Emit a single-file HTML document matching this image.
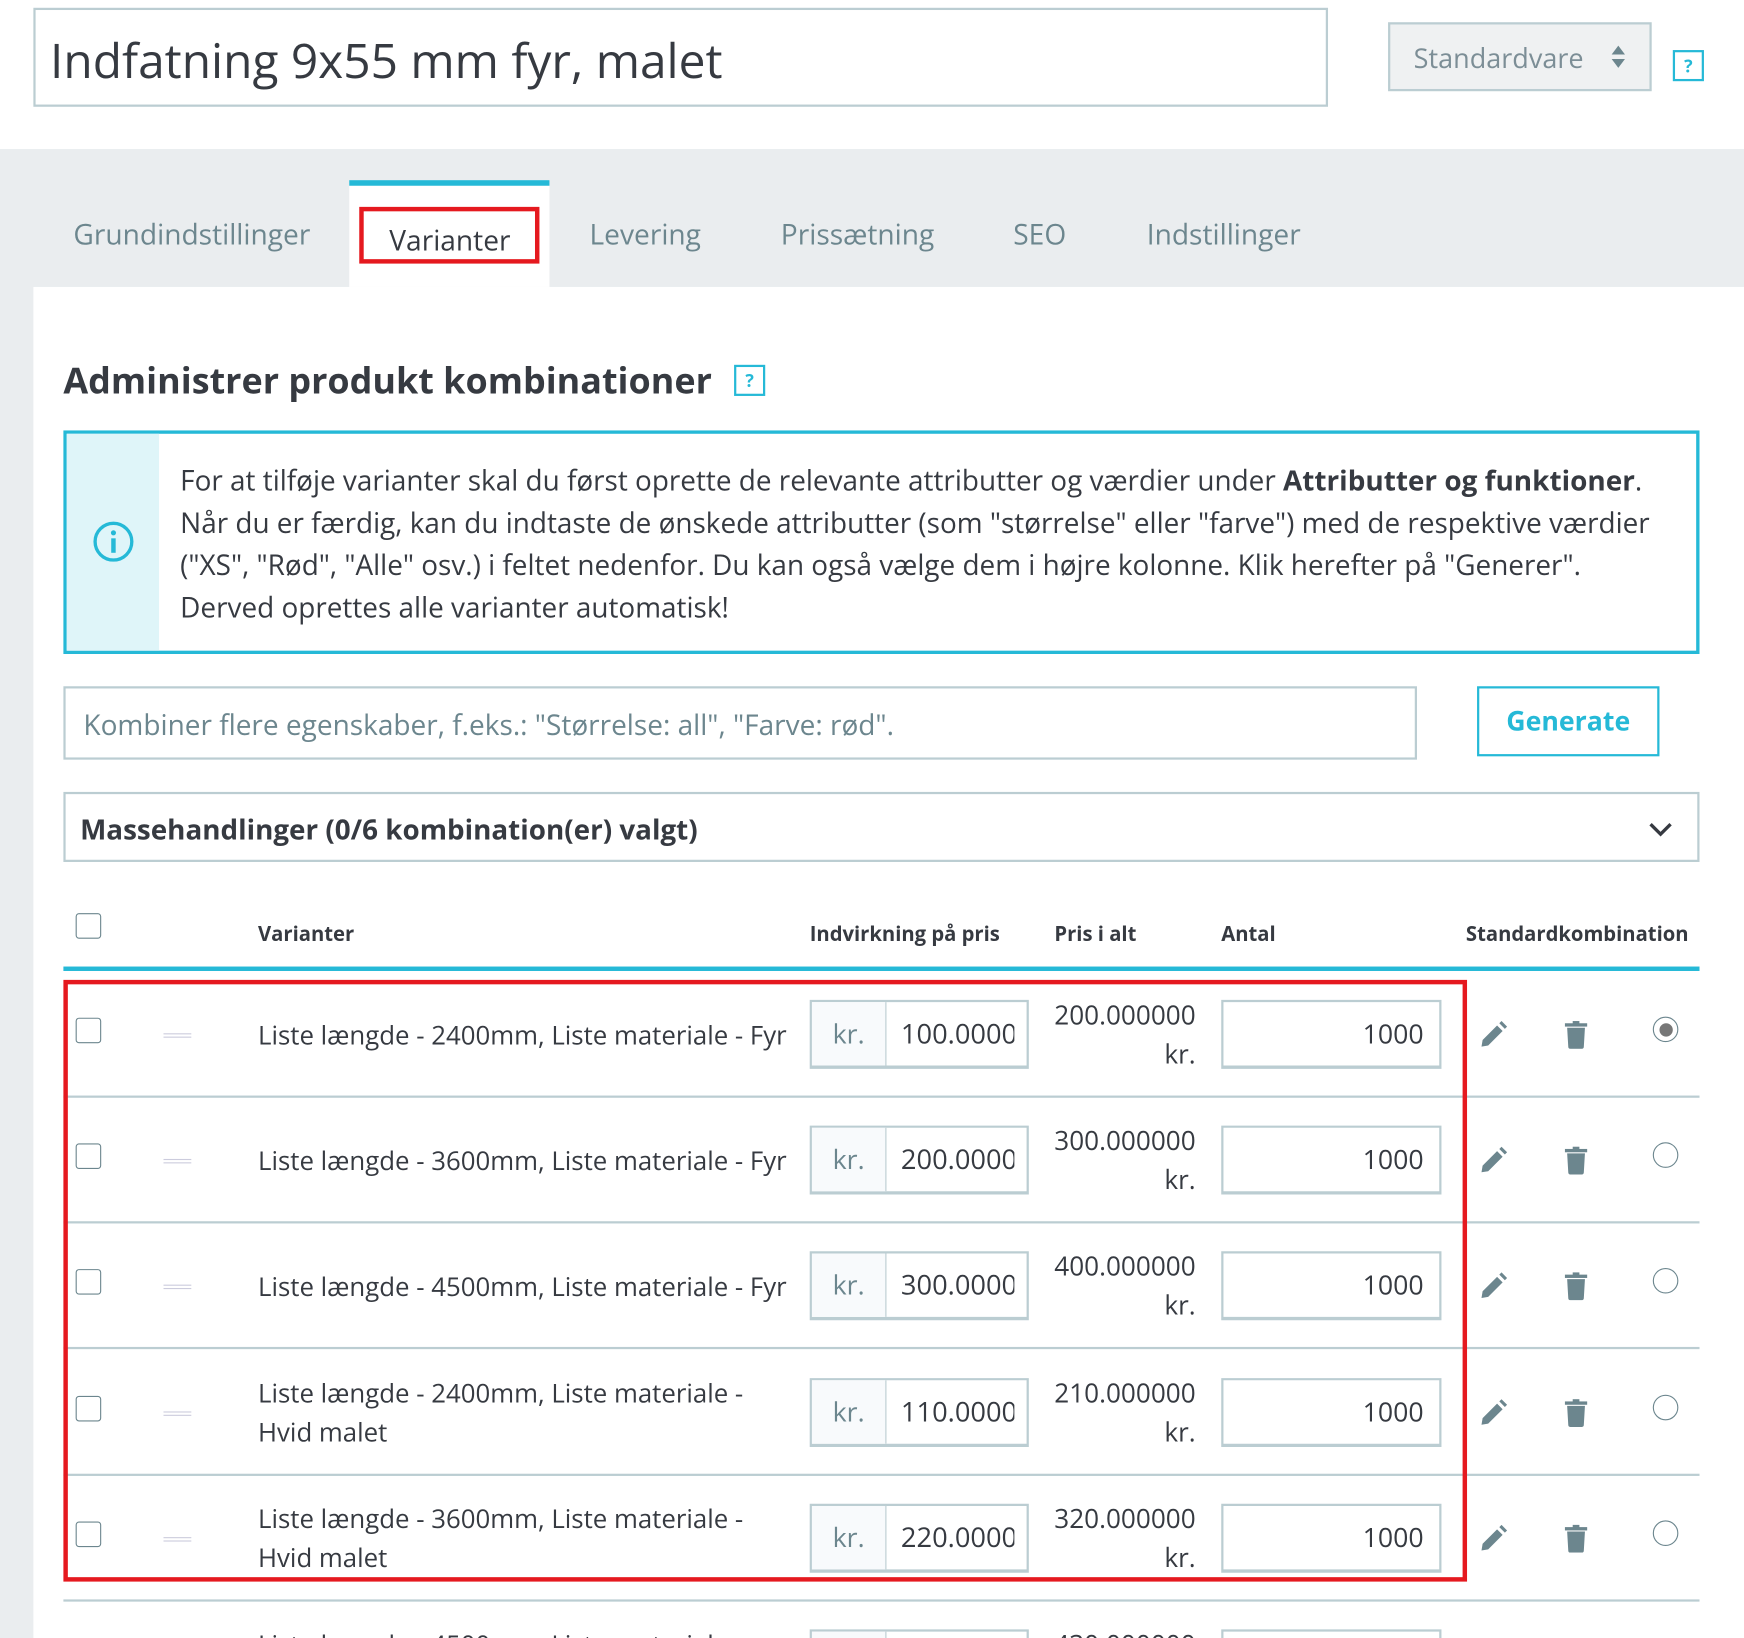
<!DOCTYPE html>
<html><head><meta charset="utf-8"><style>
html,body{margin:0;padding:0;width:1744px;height:1638px;overflow:hidden;background:#fff;font-family:"Open Sans","Liberation Sans",sans-serif;color:#363a41}
#w{position:absolute;left:0;top:0;width:1568px;height:1473px;transform:scale(1.11224);transform-origin:0 0;overflow:hidden}
.a{position:absolute}
.t{position:absolute;white-space:nowrap}
.cb{position:absolute;width:21px;height:21px;border:1.5px solid #6c868e;border-radius:3px;background:#fff}
.inp{position:absolute;border:2px solid #bbcdd2;box-sizing:border-box;background:#fff}
.tab{position:absolute;white-space:nowrap;font-size:25.3px;color:#6c868e;top:194px}
.th{position:absolute;white-space:nowrap;font-size:18.2px;font-weight:bold;top:828px}
</style></head><body><div id="w">
<div class="inp" style="left:30px;top:7px;width:1164px;height:89px"></div>
<div class="t" style="left:45px;top:24px;font-size:43px;color:#363a41">Indfatning 9x55 mm fyr, malet</div>
<div class="inp" style="left:1248px;top:20px;width:237px;height:62px;background:#eff1f2"></div>
<div class="t" style="left:1271px;top:36px;font-size:24.3px;color:#7c8e96">Standardvare</div>
<svg class="a" style="left:1447px;top:40px" width="16" height="22"><path d="M8 1L14 9H2zM8 21L14 13H2z" fill="#6c868e"/></svg>
<div class="a" style="left:1504px;top:45px;width:24px;height:24px;border:2px solid #25b9d7;color:#25b9d7;font-size:16px;font-weight:bold;text-align:center;line-height:24px">?</div>

<div class="a" style="left:0;top:134px;width:1568px;height:1339px;background:#eaedef"></div>
<div class="a" style="left:30px;top:258px;width:1538px;height:1215px;background:#fff"></div>
<div class="a" style="left:314px;top:162px;width:180px;height:96px;background:#fff;border-top:5px solid #25b9d7;box-sizing:border-box"></div>
<div class="a" style="left:323px;top:186px;width:162px;height:51px;border:4px solid #e5191f;box-sizing:border-box"></div>
<div class="tab" style="left:66px">Grundindstillinger</div>
<div class="tab" style="left:350px;top:199px;color:#363a41">Varianter</div>
<div class="tab" style="left:530px">Levering</div>
<div class="tab" style="left:702px">Prissætning</div>
<div class="tab" style="left:911px">SEO</div>
<div class="tab" style="left:1031px">Indstillinger</div>

<div class="t" style="left:57px;top:320px;font-size:32.3px;font-weight:bold;color:#363a41">Administrer produkt kombinationer</div>
<div class="a" style="left:660px;top:328px;width:24px;height:24px;border:2px solid #25b9d7;color:#25b9d7;font-size:16px;font-weight:bold;text-align:center;line-height:24px">?</div>

<div class="a" style="left:57px;top:387px;width:1471px;height:201px;border:3px solid #25b9d7;box-sizing:border-box"></div>
<div class="a" style="left:60px;top:390px;width:83px;height:195px;background:#dff5f9"></div>
<svg class="a" style="left:83px;top:468px" width="38" height="38"><circle cx="19" cy="19" r="16.5" fill="none" stroke="#25b9d7" stroke-width="3"/><circle cx="19" cy="11" r="2.3" fill="#25b9d7"/><rect x="17" y="16" width="4" height="13" fill="#25b9d7"/></svg>
<div class="a" style="left:162px;top:413px;font-size:25.1px;line-height:38px;color:#363a41;white-space:nowrap">For at tilføje varianter skal du først oprette de relevante attributter og værdier under <b>Attributter og funktioner</b>.<br>Når du er færdig, kan du indtaste de ønskede attributter (som "størrelse" eller "farve") med de respektive værdier<br>("XS", "Rød", "Alle" osv.) i feltet nedenfor. Du kan også vælge dem i højre kolonne. Klik herefter på "Generer".<br>Derved oprettes alle varianter automatisk!</div>

<div class="inp" style="left:57px;top:617px;width:1217px;height:66px"></div>
<div class="t" style="left:75px;top:635px;font-size:25.2px;color:#6c868e">Kombiner flere egenskaber, f.eks.: "Størrelse: all", "Farve: rød".</div>
<div class="a" style="left:1328px;top:617px;width:164px;height:63px;border:2px solid #25b9d7;box-sizing:border-box;color:#25b9d7;font-size:24px;font-weight:bold;text-align:center;line-height:59px">Generate</div>

<div class="inp" style="left:57px;top:712px;width:1471px;height:63px"></div>
<div class="t" style="left:72px;top:729px;font-size:25px;font-weight:bold">Massehandlinger (0/6 kombination(er) valgt)</div>
<svg class="a" style="left:1481px;top:738px" width="24" height="16"><path d="M3 3l9 9 9-9" fill="none" stroke="#363a41" stroke-width="3"/></svg>

<div class="cb" style="left:68px;top:821px"></div>
<div class="th" style="left:232px">Varianter</div>
<div class="th" style="left:728px">Indvirkning på pris</div>
<div class="th" style="left:948px">Pris i alt</div>
<div class="th" style="left:1098px">Antal</div>
<div class="th" style="left:1318px">Standardkombination</div>
<div class="a" style="left:57px;top:869px;width:1471px;height:4px;background:#25b9d7"></div>

<div id="rows"></div>
<div class="a" style="left:57px;top:881px;width:1262px;height:541px;border:4px solid #e5191f;box-sizing:border-box;z-index:5"></div>
</div>
<script>
var d=[["Liste længde - 2400mm, Liste materiale - Fyr","100.0000","200.000000",1],
["Liste længde - 3600mm, Liste materiale - Fyr","200.0000","300.000000",0],
["Liste længde - 4500mm, Liste materiale - Fyr","300.0000","400.000000",0],
["Liste længde - 2400mm, Liste materiale -<br>Hvid malet","110.0000","210.000000",0],
["Liste længde - 3600mm, Liste materiale -<br>Hvid malet","220.0000","320.000000",0],
["Liste længde - 4500mm, Liste materiale -<br>Hvid malet","330.0000","430.000000",0]];
var h="";
d.forEach(function(r,i){var y=873+i*113.2;
var two=r[0].indexOf("<br>")>0;
h+='<div class="cb" style="left:68px;top:'+(y+42)+'px"></div>';
h+='<div class="a" style="left:147px;top:'+(y+56)+'px;width:25px;height:2px;border-top:1px solid #ccd;border-bottom:1px solid #ccd"></div>';
h+='<div class="a" style="left:232px;top:'+(two?y+22:y+40)+'px;font-size:23.2px;line-height:35px;white-space:nowrap">'+r[0]+'</div>';
h+='<div class="inp" style="left:728px;top:'+(y+26)+'px;width:197px;height:62px;border-bottom-width:3px"></div>';
h+='<div class="a" style="left:730px;top:'+(y+28)+'px;width:66px;height:57px;background:#f8fafc;border-right:1.5px solid #bbcdd2;color:#6c868e;font-size:24px;text-align:center;line-height:57px">kr.</div>';
h+='<div class="a" style="left:810px;top:'+(y+28)+'px;width:102px;overflow:hidden;font-size:24.5px;line-height:57px;white-space:nowrap">'+r[1]+'</div>';
h+='<div class="a" style="left:930px;top:'+(y+22)+'px;width:145px;text-align:right;font-size:23.5px;line-height:35px">'+r[2]+'<br>kr.</div>';
h+='<div class="inp" style="left:1098px;top:'+(y+26)+'px;width:198px;height:62px;border-bottom-width:3px"></div>';
h+='<div class="a" style="left:1100px;top:'+(y+28)+'px;width:180px;text-align:right;font-size:24px;line-height:57px">1000</div>';
h+='<svg class="a" style="left:1330px;top:'+(y+44)+'px" width="26" height="26"><path d="M2 24l1-6L16 5l5 5L8 23z M18 3l2-2 5 5-2 2z" fill="#6c868e"/></svg>';
h+='<svg class="a" style="left:1406px;top:'+(y+44)+'px" width="22" height="26"><rect x="1" y="3" width="20" height="3" fill="#6c868e"/><rect x="8" y="1" width="6" height="3" fill="#6c868e"/><path d="M3 7h16l-1 17q0 2-2 2H6q-2 0-2-2z" fill="#6c868e"/></svg>';
h+='<div class="a" style="left:1486px;top:'+(y+41)+'px;width:21px;height:21px;border:1.5px solid #6c868e;border-radius:50%"></div>';
if(r[3])h+='<div class="a" style="left:1492px;top:'+(y+47)+'px;width:12px;height:12px;border-radius:50%;background:#777"></div>';
h+='<div class="a" style="left:57px;top:'+(y+112)+'px;width:1471px;height:2px;background:#bbcdd2"></div>';
});
document.getElementById("rows").innerHTML=h;
</script>
</body></html>
